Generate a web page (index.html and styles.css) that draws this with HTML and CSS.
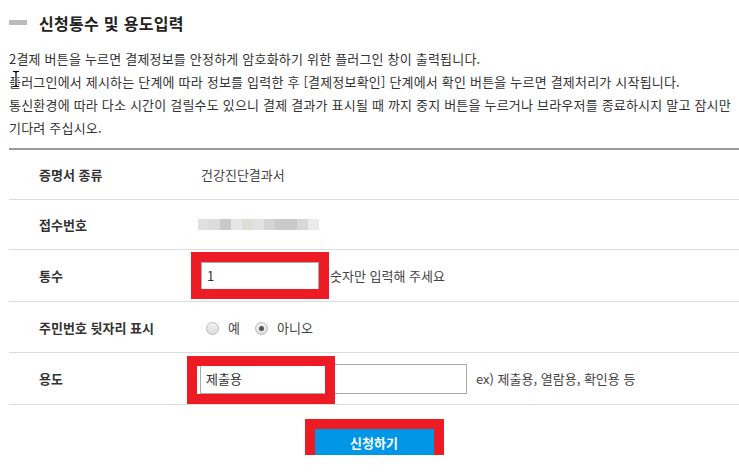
FILE: index.html
```html
<!DOCTYPE html>
<html lang="ko">
<head>
<meta charset="utf-8">
<title>신청통수 및 용도입력</title>
<link rel="stylesheet" href="styles.css">
</head>
<body>
<div class="page">
  <div class="head">
    <span class="head-bar"></span>
    <h2 class="head-title">신청통수 및 용도입력</h2>
  </div>
  <p class="notice">2결제 버튼을 누르면 결제정보를 안정하게 암호화하기 위한 플러그인 창이 출력됩니다.<br>플러그인에서 제시하는 단계에 따라 정보를 입력한 후 [결제정보확인] 단계에서 확인 버튼을 누르면 결제처리가 시작됩니다.<br>통신환경에 따라 다소 시간이 걸릴수도 있으니 결제 결과가 표시될 때 까지 중지 버튼을 누르거나 브라우저를 종료하시지 말고 잠시만 기다려 주십시오.<svg class="cursor" width="8" height="18" viewBox="0 0 8 18"><path d="M1 1.5h2.5v0.5h1v-0.5h2.5M4 2v14M1 16.5h2.5v-0.5h1v0.5h2.5" stroke="#fff" stroke-width="3" fill="none"/><path d="M1 1.5h2.5v0.5h1v-0.5h2.5M4 2v14M1 16.5h2.5v-0.5h1v0.5h2.5" stroke="#000" stroke-width="1.2" fill="none"/></svg></p>

  <div class="form">
    <div class="row">
      <div class="label">증명서 종류</div>
      <div class="value">건강진단결과서</div>
    </div>
    <div class="row">
      <div class="label">접수번호</div>
      <div class="value"><span class="blur"><i></i><i></i><i></i><i></i><i></i><i></i><i></i><i></i><i></i><i></i><i></i></span></div>
    </div>
    <div class="row row-tall">
      <div class="label">통수</div>
      <div class="value">
        <span class="field field-count"><input class="text-input input-count" type="text" value="1"><span class="mark mark-count"></span></span>
        <span class="hint hint-count">숫자만 입력해 주세요</span>
      </div>
    </div>
    <div class="row row-mid">
      <div class="label">주민번호 뒷자리 표시</div>
      <div class="value">
        <label class="radio"><input type="radio" name="rrn"><span>예</span></label>
        <label class="radio"><input type="radio" name="rrn" checked><span>아니오</span></label>
      </div>
    </div>
    <div class="row row-tall">
      <div class="label">용도</div>
      <div class="value">
        <span class="field field-use"><input class="text-input input-use" type="text" value="제출용"><span class="mark mark-use"></span></span>
        <span class="hint hint-use">ex) 제출용, 열람용, 확인용 등</span>
      </div>
    </div>
  </div>

  <div class="actions">
    <span class="field field-btn"><button class="submit" type="button">신청하기</button><span class="mark mark-btn"></span></span>
  </div>
</div>
</body>
</html>
```

FILE: styles.css
```css
html, body {
  margin: 0;
  padding: 0;
  background: #fff;
}
body {
  font-family: "Noto Sans CJK KR", "Noto Sans", sans-serif;
  color: #333;
  font-size: 13px;
  overflow: hidden;
}
.page {
  padding-left: 9px;
  width: 730px;
}
.head {
  display: flex;
  align-items: center;
  height: 45px;
}
.head-bar {
  width: 18px;
  height: 5px;
  background: #bcbcbc;
  margin-right: 12px;
}
.head-title {
  margin: 0;
  font-size: 16px;
  font-weight: 700;
  color: #222;
  letter-spacing: 0.3px;
}
.notice {
  position: relative;
  margin: 2px 0 0 0;
  padding-right: 6px;
  line-height: 23px;
  font-size: 13px;
  letter-spacing: 0.2px;
  word-break: keep-all;
  color: #333;
  height: 92px;
}
.cursor {
  position: absolute;
  left: 3px;
  top: 23px;
}
.form {
  margin-top: 9px;
  border-top: 2px solid #9a9a9a;
}
.row {
  display: flex;
  align-items: center;
  box-sizing: border-box;
  height: 50px;
  border-bottom: 1px solid #dcdcdc;
}
.row-mid {
  height: 51px;
}
.row-tall {
  height: 52px;
}
.label {
  width: 162px;
  padding-left: 30px;
  font-weight: 700;
  color: #333;
  flex: none;
}
.value {
  display: flex;
  align-items: center;
  color: #444;
}
.blur {
  display: flex;
  margin-left: -3px;
}
.blur i {
  display: block;
  width: 11px;
  height: 11px;
  background: #e0e0e0;
}
.blur i:nth-child(2) { background: #dcdcdc; }
.blur i:nth-child(3) { background: #c9c9c9; }
.blur i:nth-child(4) { background: #e4e6e8; }
.blur i:nth-child(5) { background: #dfded6; }
.blur i:nth-child(6) { background: #e2e2e4; }
.blur i:nth-child(7) { background: #d5d3d5; }
.blur i:nth-child(8) { background: #cbc9cb; }
.blur i:nth-child(9) { background: #cbc9cb; }
.blur i:nth-child(10) { background: #d7d7d9; }
.blur i:nth-child(11) { background: #e8eaec; }

.field {
  position: relative;
  display: inline-block;
}
.text-input {
  box-sizing: border-box;
  display: block;
  margin: 0;
  border: 1px solid #aaa;
  padding: 0 5px;
  font-family: inherit;
  font-size: 13px;
  color: #333;
  background: #fff;
  outline: none;
}
.input-count {
  width: 118px;
  height: 28px;
}
.input-use {
  width: 267px;
  height: 30px;
  margin-left: -1px;
}
.mark {
  position: absolute;
  box-sizing: border-box;
  border: 10px solid #ed1c24;
  pointer-events: none;
}
.mark-count {
  left: -10px;
  top: -10px;
  width: 138px;
  height: 47px;
}
.mark-use {
  left: -14px;
  top: -8px;
  width: 148px;
  height: 48px;
}
.hint-count {
  margin-left: 11px;
}
.hint-use {
  margin-left: 9px;
}
.radio {
  display: flex;
  align-items: center;
  margin-right: 15px;
}
.radio input {
  -webkit-appearance: none;
  appearance: none;
  width: 13px;
  height: 13px;
  margin: 2px 9px 0 5px;
  border: 1px solid #b8b8b8;
  border-radius: 50%;
  background: linear-gradient(#f2f2f2, #dcdcdc);
  box-sizing: border-box;
  display: grid;
  place-items: center;
}
.radio input:checked::after {
  content: "";
  width: 5px;
  height: 5px;
  border-radius: 50%;
  background: #555;
}
.radio + .radio input {
  margin-left: 0;
}
.actions {
  display: flex;
  justify-content: center;
  padding-top: 24px;
}
.submit {
  display: block;
  width: 119px;
  height: 26px;
  border: 0;
  margin: 0;
  padding: 0;
  background: #0096e6;
  color: #fff;
  font-family: inherit;
  font-weight: 700;
  font-size: 13px;
}
.mark-btn {
  left: -10px;
  top: -10px;
  width: 139px;
  height: 46px;
}
```
